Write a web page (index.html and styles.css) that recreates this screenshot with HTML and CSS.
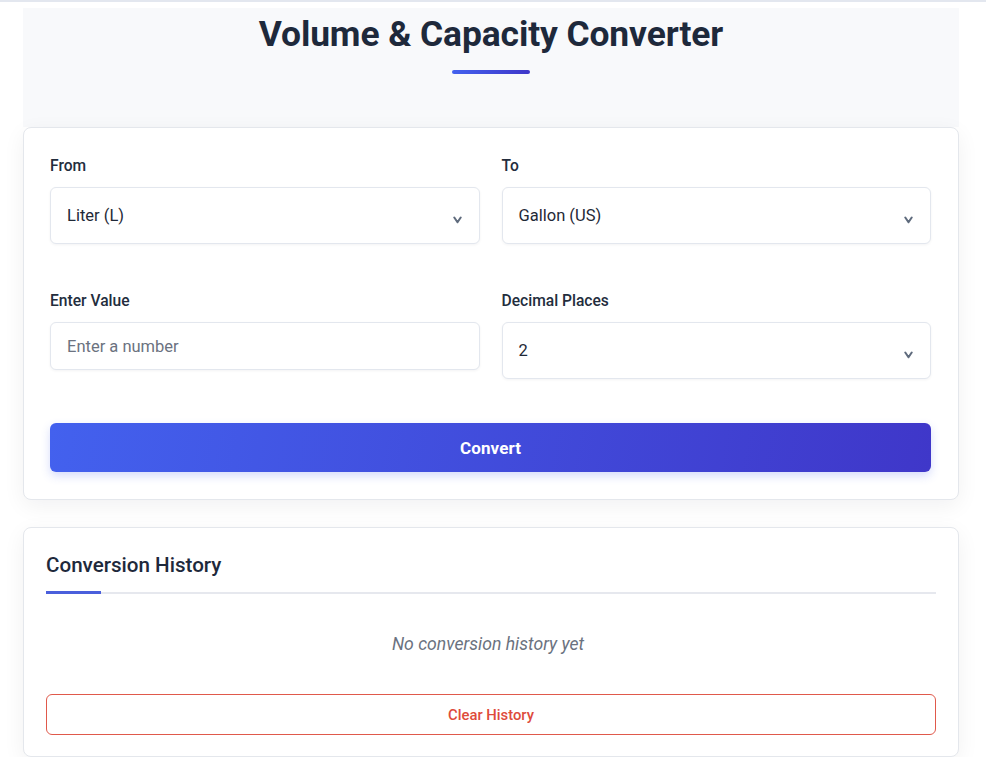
FILE: index.html
```html
<!DOCTYPE html>
<html lang="en">
<head>
<meta charset="utf-8">
<title>Volume &amp; Capacity Converter</title>
<link rel="stylesheet" href="styles.css">
</head>
<body>
<div class="topline"></div>
<div class="container">
  <header class="header">
    <h1 class="title">Volume &amp; Capacity Converter</h1>
    <div class="title-bar"></div>
  </header>

  <section class="card converter">
    <div class="form-grid">
      <div class="field">
        <label class="label">From</label>
        <div class="select">
          <span>Liter (L)</span>
          <svg class="chev" width="9" height="8" viewBox="0 0 9 8"><path d="M1.3 1.5 L4.5 6.3 L7.7 1.5" fill="none" stroke="#5f6b7d" stroke-width="2" stroke-linecap="round" stroke-linejoin="round"/></svg>
        </div>
      </div>
      <div class="field">
        <label class="label">To</label>
        <div class="select">
          <span>Gallon (US)</span>
          <svg class="chev" width="9" height="8" viewBox="0 0 9 8"><path d="M1.3 1.5 L4.5 6.3 L7.7 1.5" fill="none" stroke="#5f6b7d" stroke-width="2" stroke-linecap="round" stroke-linejoin="round"/></svg>
        </div>
      </div>
      <div class="field">
        <label class="label">Enter Value</label>
        <input class="input" type="text" placeholder="Enter a number">
      </div>
      <div class="field">
        <label class="label">Decimal Places</label>
        <div class="select">
          <span>2</span>
          <svg class="chev" width="9" height="8" viewBox="0 0 9 8"><path d="M1.3 1.5 L4.5 6.3 L7.7 1.5" fill="none" stroke="#5f6b7d" stroke-width="2" stroke-linecap="round" stroke-linejoin="round"/></svg>
        </div>
      </div>
    </div>
    <button class="convert-btn">Convert</button>
  </section>

  <section class="card history">
    <h2 class="history-title">Conversion History</h2>
    <p class="empty">No conversion history yet</p>
    <button class="clear-btn">Clear History</button>
  </section>
</div>
</body>
</html>
```

FILE: styles.css
```css
* { box-sizing: border-box; }

html, body {
  margin: 0;
  padding: 0;
  background: #ffffff;
}

body {
  font-family: Roboto, "Liberation Sans", Arial, sans-serif;
  color: #1e293b;
}

.topline {
  height: 2px;
  background: #e3e7ef;
}

.container {
  width: 936px;
  margin: 6px 0 0 23px;
}

.header {
  background: #f8f9fb;
  height: 119px;
  display: flex;
  flex-direction: column;
  align-items: center;
  padding-top: 5px;
}

.title {
  margin: 0;
  font-size: 35.4px;
  line-height: 43px;
  font-weight: 700;
  color: #1e293b;
  letter-spacing: -0.1px;
}

.title-bar {
  width: 78px;
  height: 4px;
  margin-top: 14px;
  border-radius: 2px;
  background: linear-gradient(90deg, #4361ee, #3f37c9);
}

.card {
  background: #ffffff;
  border: 1px solid #e4e7ec;
  border-radius: 8px;
  box-shadow: 0 6px 22px rgba(15, 23, 42, 0.06);
}

.converter {
  padding: 26px 27px 27px 26px;
}

.form-grid {
  display: grid;
  grid-template-columns: 1fr 1fr;
  column-gap: 22px;
  row-gap: 45px;
}

.field {
  display: flex;
  flex-direction: column;
}

.label {
  font-size: 15.6px;
  line-height: 22px;
  font-weight: 500;
  color: #232d3d;
  padding-top: 1px;
  margin-bottom: 10px;
}

.select {
  height: 57px;
  border: 1px solid #e3e7ee;
  border-radius: 6px;
  background: #ffffff;
  box-shadow: 0 1px 3px rgba(15, 23, 42, 0.05);
  display: flex;
  align-items: center;
  justify-content: space-between;
  padding: 0 17px 0 16px;
  font-size: 16.5px;
  color: #1f2937;
}

.chev {
  margin-top: 8px;
}

.input {
  height: 48px;
  border: 1px solid #e3e7ee;
  border-radius: 6px;
  background: #ffffff;
  box-shadow: 0 1px 3px rgba(15, 23, 42, 0.05);
  padding: 0 16px;
  font-family: inherit;
  font-size: 16.5px;
  color: #1f2937;
  outline: none;
}

.input::placeholder {
  color: #6b7280;
}

.convert-btn {
  display: block;
  width: 100%;
  height: 49px;
  margin-top: 44px;
  border: none;
  border-radius: 6px;
  background: linear-gradient(100deg, #4361ee 0%, #3f37c9 100%);
  box-shadow: 0 4px 10px rgba(67, 97, 238, 0.22);
  color: #ffffff;
  font-family: inherit;
  font-size: 17px;
  font-weight: 700;
  letter-spacing: 0.1px;
  padding-bottom: 1px;
  cursor: pointer;
}

.history {
  margin-top: 27px;
  padding: 22px 22px 21px 22px;
}

.history-title {
  position: relative;
  margin: 0;
  font-size: 20.6px;
  line-height: 30px;
  font-weight: 500;
  color: #1e293b;
  padding-bottom: 12px;
  border-bottom: 2px solid #e6e8ee;
}

.history-title::after {
  content: "";
  position: absolute;
  left: 0;
  bottom: -2px;
  width: 55px;
  height: 3px;
  background: #4a5fdc;
}

.empty {
  margin: 37px 0 0 0;
  line-height: 26px;
  font-size: 17.6px;
  font-style: italic;
  color: #6b7280;
  text-align: center;
  padding-right: 6px;
}

.clear-btn {
  display: block;
  width: 100%;
  height: 41px;
  margin-top: 37px;
  background: #ffffff;
  border: 1px solid #e0594b;
  border-radius: 6px;
  color: #de4b3b;
  font-family: inherit;
  font-size: 14.8px;
  font-weight: 500;
  cursor: pointer;
}
```
